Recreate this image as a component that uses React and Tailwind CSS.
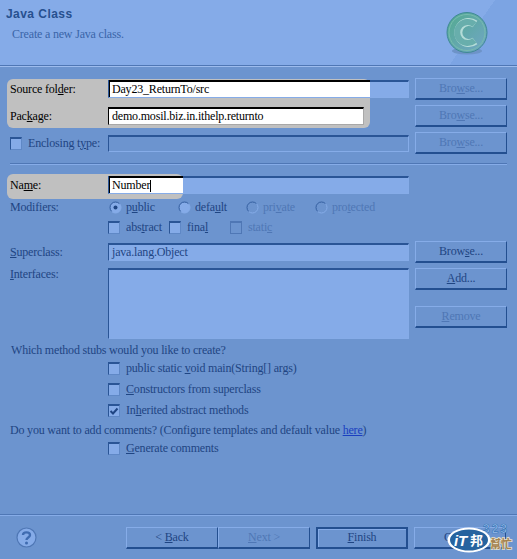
import React from 'react';

const Button = ({ children, disabled, strong, className = '' }) => (
  <div
    className={`w-[92px] h-[22px] flex items-center justify-center whitespace-pre bg-[#6c94cf] ${
      strong
        ? 'border-[2px] border-[#234f90] shadow-[inset_1px_1px_0_#86ace8]'
        : 'border border-t-[#86ace8] border-l-[#86ace8] border-r-[#234f90] border-b-[2px] border-b-[#234f90]'
    } ${disabled ? 'text-[#4f77b5]' : 'text-[#1f4583]'} ${className}`}
  >
    {children}
  </div>
);

const Field = ({ children, disabled, className = 'h-[18px]' }) => (
  <div
    className={`relative w-[301px] border-t-2 border-l border-t-[#2a5596] border-l-[#2a5596] border-r border-b border-r-[#86ace8] border-b-[#86ace8] pl-[2px] flex items-center text-[#1f4583] ${
      disabled ? 'bg-[#6c94cf]' : 'bg-[#85abe8]'
    } ${className}`}
  >
    {children}
  </div>
);

const Check = ({ checked, disabled, className = '' }) => (
  <div
    className={`w-[12px] h-[13px] shrink-0 flex items-center justify-center border-t-2 border-l border-r border-b ${
      disabled
        ? 'bg-[#6c94cf] border-[#4f77b5]'
        : 'bg-[#85abe8] border-t-[#2a5596] border-l-[#2a5596] border-r-[#5f88c6] border-b-[#5f88c6]'
    } ${className}`}
  >
    {checked && (
      <svg width="10" height="9" viewBox="0 0 10 9">
        <path d="M1.5 4 L4 6.5 L8.5 1.5" fill="none" stroke="#1f4583" strokeWidth="2" />
      </svg>
    )}
  </div>
);

const Radio = ({ checked, disabled }) => (
  <svg width="13" height="13" viewBox="0 0 13 13" className="shrink-0">
    <circle cx="6.5" cy="6.5" r="5.5" fill={disabled ? '#6c94cf' : '#85abe8'} stroke="#86ace8" />
    <path d="M2.6 10.4 A5.5 5.5 0 0 1 10.4 2.6" fill="none" stroke="#2a5596" />
    {checked && <circle cx="6.5" cy="6.5" r="2" fill="#1f4583" />}
  </svg>
);

const Label = ({ children, className = '' }) => (
  <div className={`w-[98px] shrink-0 whitespace-nowrap text-[#1f4583] ${className}`}>{children}</div>
);

const ClassIcon = () => (
  <svg width="42" height="44" viewBox="0 0 42 44">
    <defs>
      <linearGradient id="ball" x1="0.1" y1="0.1" x2="0.9" y2="0.9">
        <stop offset="0" stopColor="#55aa94" />
        <stop offset="1" stopColor="#6fa6c2" />
      </linearGradient>
    </defs>
    <ellipse cx="21" cy="39" rx="15" ry="3.5" fill="#6d93c8" />
    <circle cx="21" cy="20.5" r="20" fill="url(#ball)" stroke="#3f8a94" strokeWidth="1" />
    <circle cx="21" cy="20.5" r="18" fill="none" stroke="#77bcae" strokeWidth="1" />
    <path d="M29 12 A10.5 10.5 0 1 0 29 29" fill="none" stroke="#b4dcd8" strokeWidth="8" />
    <path d="M28.5 12.5 A10.5 10.5 0 1 0 28.5 28.5" fill="none" stroke="#68aeac" strokeWidth="6" />
  </svg>
);

const HelpIcon = () => (
  <svg width="21" height="21" viewBox="0 0 21 21">
    <circle cx="10.5" cy="10.5" r="9.5" fill="#85abe8" stroke="#4f77b5" strokeWidth="1.2" />
    <path d="M7 8 C7 4.5 14 4.5 14 8 C14 10.5 10.5 10.5 10.5 13" fill="none" stroke="#3f6bb0" strokeWidth="2.4" />
    <circle cx="10.5" cy="16" r="1.5" fill="#3f6bb0" />
  </svg>
);

const ItLogo = () => (
  <svg width="68" height="33" viewBox="0 0 68 33">
    <text x="36" y="12" fontSize="12" fontWeight="bold" letterSpacing="2" fill="#a5c6f2" stroke="#3a78b8" strokeWidth="0.7" fontFamily="'Liberation Sans', sans-serif">323</text>
    <text x="43" y="27" fontSize="11" fontWeight="bold" fill="#a5824e" stroke="#e6e0cc" strokeWidth="1.5" paintOrder="stroke" fontFamily="'Noto Sans CJK TC', sans-serif">幫忙</text>
    <ellipse cx="22" cy="19" rx="21.5" ry="12.5" fill="#ffffff" />
    <ellipse cx="22" cy="19" rx="19" ry="10.5" fill="#26639f" />
    <text x="7" y="25" fontSize="15" fontWeight="bold" fontStyle="italic" fill="#ffffff" fontFamily="'Liberation Sans', sans-serif">iT</text>
    <text x="23" y="24" fontSize="13" fontWeight="bold" fill="#ffffff" fontFamily="'Noto Sans CJK TC', sans-serif">邦</text>
  </svg>
);

const App = () => {
  return (
    <div className="relative w-[517px] h-[559px] overflow-hidden bg-[#6c94cf] font-['Liberation_Serif','Noto_Sans_CJK_TC',serif] text-[12px] tracking-[-0.19px] leading-[15px] flex flex-col">
      {/* banner */}
      <div className="h-[66px] shrink-0 flex justify-between bg-[linear-gradient(125deg,#85abe8_88%,#7ca4e3_88%)] border-b border-b-[#4f77b5]">
        <div>
          <div className="pl-[6px] pt-[7px] font-['Liberation_Sans',sans-serif] font-bold text-[12px] tracking-[0.45px] text-[#27508f]">Java Class</div>
          <div className="pl-[12px] pt-[5px] text-[#3a65a8]">Create a new Java class.</div>
        </div>
        <div className="pt-[12px] pr-[29px]"><ClassIcon /></div>
      </div>
      <div className="h-px bg-[#9dbcee] shrink-0" />

      <div className="flex-1 pl-[10px] pr-[10px] pt-[11px] flex flex-col">
        {/* source + package with the grey highlight behind */}
        <div className="relative">
          <div className="absolute left-[-3px] top-[1px] w-[363px] h-[49px] rounded-[6px] bg-[#c0c0c0]" />
          <div className="relative flex items-center h-[22px]">
            <Label className="!text-black">Source fol<u>d</u>er:</Label>
            <Field className="h-[18px]">
              <div className="absolute left-0 top-[-2px] w-[261px] h-[17px] bg-white border-t-2 border-l border-t-black border-l-black" />
              <span className="relative text-black pl-[1px]">Day23_ReturnTo/src</span>
            </Field>
            <Button disabled className="ml-[6px]">Bro<u>w</u>se...</Button>
          </div>
          <div className="relative flex items-center h-[22px] mt-[5px]">
            <Label className="!text-black">Pac<u>k</u>age:</Label>
            <div className="w-[256px] h-[18px] bg-white border-t-2 border-l border-t-black border-l-black border-r border-b border-r-[#a8a8a8] border-b-[#a8a8a8] pl-[3px] flex items-center text-black">demo.mosil.biz.in.ithelp.returnto</div>
            <Button disabled className="ml-[51px]">Bro<u>w</u>se...</Button>
          </div>
        </div>

        <div className="flex items-center h-[22px] mt-[5px]">
          <Label className="flex items-center">
            <Check className="mr-[6px]" />
            <span>Enclosing t<u>y</u>pe:</span>
          </Label>
          <Field disabled className="h-[17px]" />
          <Button disabled className="ml-[6px]">Bro<u>w</u>se...</Button>
        </div>

        <div className="h-[2px] mt-[9px] mr-0 bg-[#86ace8] border-t border-t-[#4f77b5]" />

        {/* name */}
        <div className="relative mt-[11px]">
          <div className="absolute left-[-3px] top-[-2px] w-[176px] h-[25px] rounded-[6px] bg-[#c0c0c0]" />
          <div className="relative flex items-center h-[18px]">
            <Label className="!text-black">Na<u>m</u>e:</Label>
            <Field className="h-[18px]">
              <div className="absolute left-0 top-[-2px] w-[74px] h-[17px] bg-white border-t-2 border-l border-t-black border-l-black" />
              <span className="relative text-black pl-[1px]">Number</span>
              <span className="relative w-px h-[12px] bg-black" />
            </Field>
          </div>
        </div>

        {/* modifiers */}
        <div className="flex items-center h-[15px] mt-[6px] text-[#1f4583]">
          <Label>Modifiers:</Label>
          <div className="flex items-center w-[69px] ml-[1px] gap-[4px]"><Radio checked /><span>p<u>u</u>blic</span></div>
          <div className="flex items-center w-[68px] gap-[4px]"><Radio /><span>defa<u>u</u>lt</span></div>
          <div className="flex items-center w-[69px] gap-[4px] text-[#4f77b5]"><Radio disabled /><span>pri<u>v</u>ate</span></div>
          <div className="flex items-center gap-[4px] text-[#4f77b5]"><Radio disabled /><span>pro<u>t</u>ected</span></div>
        </div>
        <div className="flex items-center h-[15px] mt-[5px] text-[#1f4583]">
          <div className="w-[98px] shrink-0" />
          <div className="flex items-center w-[61px] gap-[6px]"><Check /><span>abs<u>t</u>ract</span></div>
          <div className="flex items-center w-[61px] gap-[6px]"><Check /><span>fina<u>l</u></span></div>
          <div className="flex items-center gap-[6px] text-[#4f77b5]"><Check disabled /><span>stati<u>c</u></span></div>
        </div>

        {/* superclass + interfaces */}
        <div className="flex items-center h-[22px] mt-[6px]">
          <Label><u>S</u>uperclass:</Label>
          <Field className="h-[18px]"><span className="pl-[1px]">java.lang.Object</span></Field>
          <Button className="ml-[6px]">Brow<u>s</u>e...</Button>
        </div>
        <div className="flex mt-[5px]">
          <Label className="-mt-[1px]"><u>I</u>nterfaces:</Label>
          <Field className="!h-[71px]" />
          <div className="ml-[6px] flex flex-col">
            <Button><u>A</u>dd...</Button>
            <Button disabled className="mt-[16px]"><u>R</u>emove</Button>
          </div>
        </div>

        {/* method stubs */}
        <div className="mt-[4px] text-[#1f4583] pl-px">Which method stubs would you like to create?</div>
        <div className="ml-[98px] mt-[3px] flex items-center gap-[6px] h-[15px] text-[#1f4583]"><Check /><span>public static <u>v</u>oid main(String[] args)</span></div>
        <div className="ml-[98px] mt-[6px] flex items-center gap-[6px] h-[15px] text-[#1f4583]"><Check /><span><u>C</u>onstructors from superclass</span></div>
        <div className="ml-[98px] mt-[6px] flex items-center gap-[6px] h-[15px] text-[#1f4583]"><Check checked /><span>In<u>h</u>erited abstract methods</span></div>
        <div className="mt-[5px] text-[#1f4583]">Do you want to add comments? (Configure templates and default value <span className="underline text-[#1a3fc0]">here</span>)</div>
        <div className="ml-[98px] mt-[3px] flex items-center gap-[6px] h-[15px] text-[#1f4583]"><Check /><span><u>G</u>enerate comments</span></div>
      </div>

      {/* footer */}
      <div className="h-[2px] shrink-0 bg-[#86ace8] border-t border-t-[#4f77b5]" />
      <div className="h-[43px] shrink-0 flex items-center pl-[16px]">
        <HelpIcon />
        <div className="ml-[89px] flex">
          <Button>{'< '}<u>B</u>ack</Button>
          <Button disabled><u>N</u>ext {'>'}</Button>
          <Button strong className="ml-[6px]"><u>F</u>inish</Button>
          <Button className="ml-[6px]">Cancel</Button>
        </div>
      </div>

      {/* watermark */}
      <div className="absolute left-[447px] top-[521px]"><ItLogo /></div>
    </div>
  );
};

export default App;
